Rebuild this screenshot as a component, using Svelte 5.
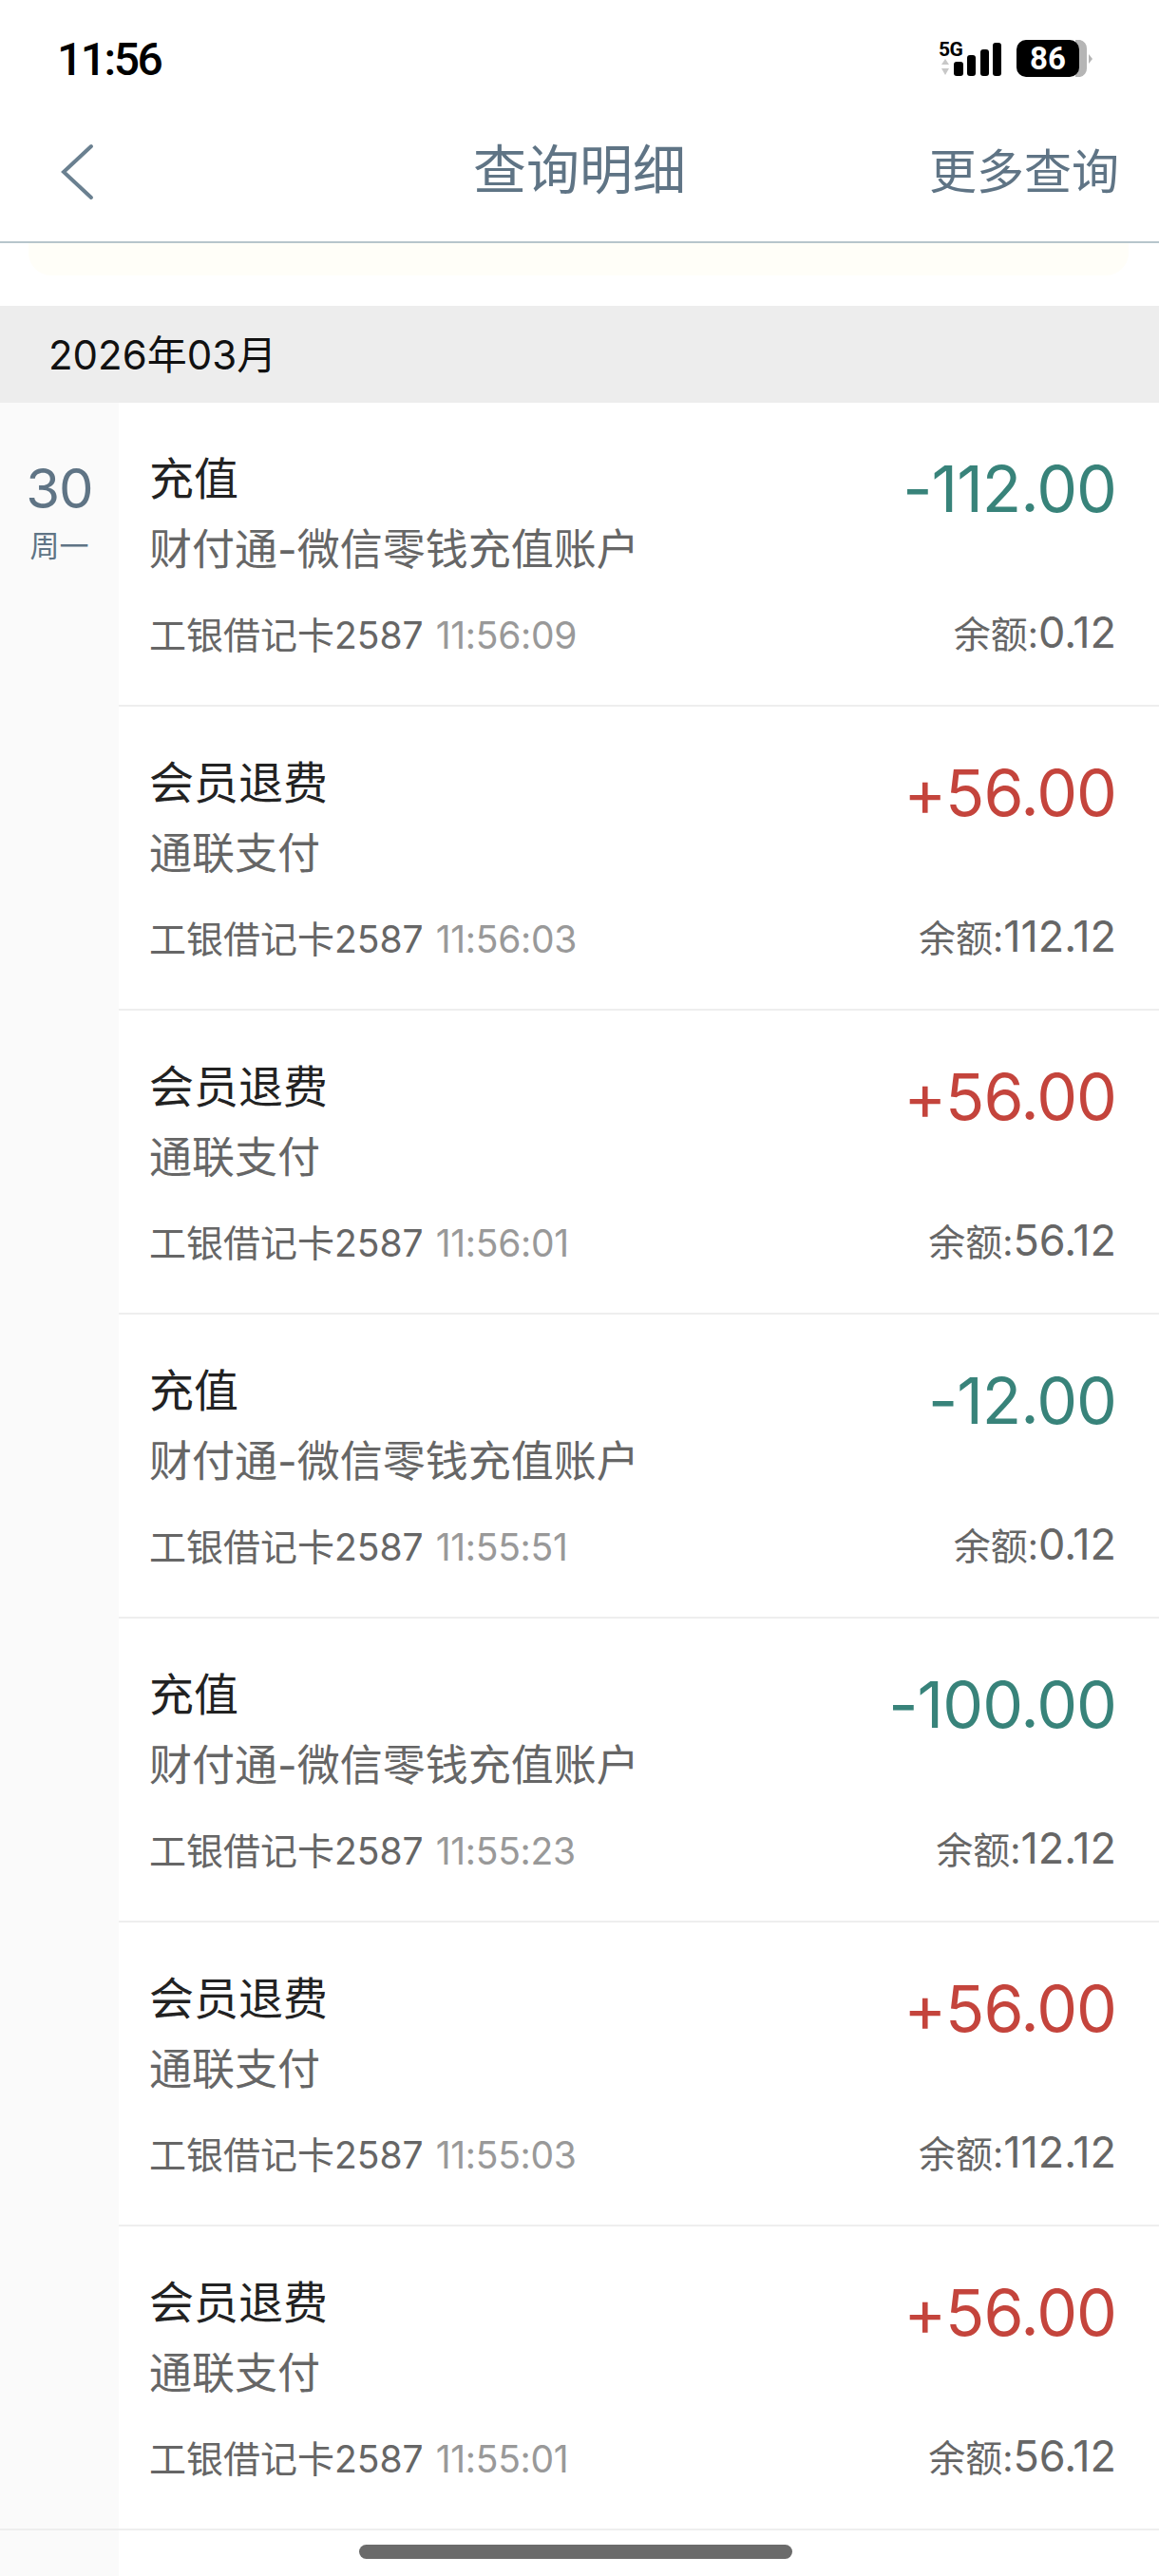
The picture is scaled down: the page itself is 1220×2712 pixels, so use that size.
<script>
	const rows = [
		{ title: '充值', sub: '财付通-微信零钱充值账户', time: '11:56:09', amount: '-112.00', balance: '0.12' },
		{ title: '会员退费', sub: '通联支付', time: '11:56:03', amount: '+56.00', balance: '112.12' },
		{ title: '会员退费', sub: '通联支付', time: '11:56:01', amount: '+56.00', balance: '56.12' },
		{ title: '充值', sub: '财付通-微信零钱充值账户', time: '11:55:51', amount: '-12.00', balance: '0.12' },
		{ title: '充值', sub: '财付通-微信零钱充值账户', time: '11:55:23', amount: '-100.00', balance: '12.12' },
		{ title: '会员退费', sub: '通联支付', time: '11:55:03', amount: '+56.00', balance: '112.12' },
		{ title: '会员退费', sub: '通联支付', time: '11:55:01', amount: '+56.00', balance: '56.12' }
	];
</script>

<div class="page">
	<div class="status">
		<span class="clock">11:56</span>
		<svg class="indicators" width="166" height="42" viewBox="0 0 166 42">
			<text x="2" y="18" class="net">5G</text>
			<path d="M9 21l-4 6h8zM5 31h8l-4 7z" fill="#c8c8c8" />
			<rect x="18" y="24" width="10" height="15" rx="3" />
			<rect x="32" y="17" width="9" height="22" rx="3" />
			<rect x="46" y="11" width="9" height="28" rx="3" />
			<rect x="59" y="4" width="9" height="35" rx="3" />
			<path d="M146 1h5a9 9 0 0 1 7 9v21a9 9 0 0 1-7 9h-5z" fill="#b5b5b5" />
			<rect x="84" y="1" width="66" height="39" rx="10" />
			<path d="M160 16l4 5-4 5z" fill="#b5b5b5" />
			<text x="117" y="32" class="level">86</text>
		</svg>
	</div>

	<header class="nav">
		<svg class="back" width="40" height="60" viewBox="0 0 40 60">
			<path d="M36 3L7 30l29 27" />
		</svg>
		<h1>查询明细</h1>
		<span class="more">更多查询</span>
	</header>

	<div class="notice"></div>

	<div class="month">2026年03月</div>

	<div class="group">
		<aside class="day">
			<span class="num">30</span>
			<span class="week">周一</span>
		</aside>
		<div class="items">
			{#each rows as row}
				<div class="row">
					<div class="left">
						<div class="title">{row.title}</div>
						<div class="sub">{row.sub}</div>
						<div class="meta">工银借记卡2587 <span class="time">{row.time}</span></div>
					</div>
					<div class="right">
						<div class="amount" class:in={row.amount[0] === '+'}>{row.amount}</div>
						<div class="balance">余额:<span>{row.balance}</span></div>
					</div>
				</div>
			{/each}
		</div>
	</div>
	<div class="next"></div>

	<div class="home"></div>
</div>

<style>
	:global(body) {
		background: #fff;
	}
	.page {
		position: relative;
		width: 1220px;
		height: 2712px;
		overflow: hidden;
		display: flex;
		flex-direction: column;
		background: #fff;
		font-family: Inter, "Noto Sans CJK SC", sans-serif;
	}
	.status {
		height: 126px;
		box-sizing: border-box;
		padding: 42px 68px 0 60px;
		display: flex;
		justify-content: space-between;
		align-items: flex-start;
	}
	.clock {
		font-family: Roboto, sans-serif;
		font-size: 48px;
		line-height: 42px;
		font-weight: 500;
		letter-spacing: -2.5px;
		color: #000;
	}
	.indicators {
		margin-top: -1px;
	}
	.indicators .net {
		font-family: Roboto, sans-serif;
		font-size: 21px;
		font-weight: 700;
		letter-spacing: -0.5px;
	}
	.indicators .level {
		font-family: Roboto, sans-serif;
		font-size: 33px;
		font-weight: 700;
		fill: #fff;
		text-anchor: middle;
	}
	.nav {
		height: 130px;
		box-sizing: border-box;
		padding: 0 42px 18px 60px;
		position: relative;
		display: flex;
		align-items: center;
		justify-content: space-between;
		border-bottom: 2px solid #b7c5cc;
		color: #5f7485;
	}
	.back path {
		fill: none;
		stroke: #6a8090;
		stroke-width: 4;
		stroke-linecap: round;
	}
	.nav h1 {
		position: absolute;
		left: 0;
		right: 0;
		top: 18px;
		margin: 0;
		text-align: center;
		font-size: 56px;
		line-height: 70px;
		font-weight: 400;
	}
	.more {
		font-size: 50px;
		line-height: 70px;
	}
	.notice {
		height: 34px;
		margin: 0 32px 32px 30px;
		background: #fffef8;
		border-radius: 0 0 24px 24px;
	}
	.month {
		height: 102px;
		box-sizing: border-box;
		padding: 0 0 6px 51px;
		display: flex;
		align-items: center;
		background: #ededed;
		color: #111;
		font-size: 42px;
	}
	.group {
		display: flex;
		border-bottom: 2px solid #eeeeee;
	}
	.day {
		width: 125px;
		flex: none;
		box-sizing: border-box;
		padding-top: 55px;
		background: #fafafa;
		display: flex;
		flex-direction: column;
		align-items: center;
		color: #5f7485;
	}
	.num {
		font-size: 58px;
		line-height: 70px;
		letter-spacing: -1px;
	}
	.week {
		font-size: 31px;
		line-height: 48px;
		margin-top: 2px;
	}
	.items {
		flex: 1;
		min-width: 0;
	}
	.row {
		height: 320px;
		box-sizing: border-box;
		padding: 50px 45px 0 32px;
		display: flex;
		justify-content: space-between;
		border-bottom: 2px solid #eeeeee;
	}
	.row:last-child {
		height: 318px;
		border-bottom: 0;
	}
	.next {
		flex: 1;
		width: 125px;
		background: #fafafa;
	}
	.title {
		font-size: 47px;
		line-height: 60px;
		color: #222;
	}
	.sub {
		margin-top: 15px;
		font-size: 45px;
		line-height: 60px;
		color: #666;
	}
	.meta {
		margin-top: 33px;
		font-size: 39px;
		line-height: 54px;
		color: #666;
	}
	.time {
		color: #999;
		margin-left: 2px;
		letter-spacing: -0.3px;
	}
	.right {
		text-align: right;
	}
	.amount {
		font-size: 68px;
		line-height: 80px;
		letter-spacing: -1px;
		color: #38837a;
	}
	.amount.in {
		color: #c4443c;
	}
	.balance {
		margin-top: 85px;
		font-size: 39px;
		line-height: 54px;
		color: #666;
	}
	.balance span {
		font-size: 45px;
		line-height: 54px;
	}
	.home {
		position: absolute;
		left: 378px;
		top: 2679px;
		width: 456px;
		height: 15px;
		border-radius: 8px;
		background: #6b6b6b;
	}
</style>
